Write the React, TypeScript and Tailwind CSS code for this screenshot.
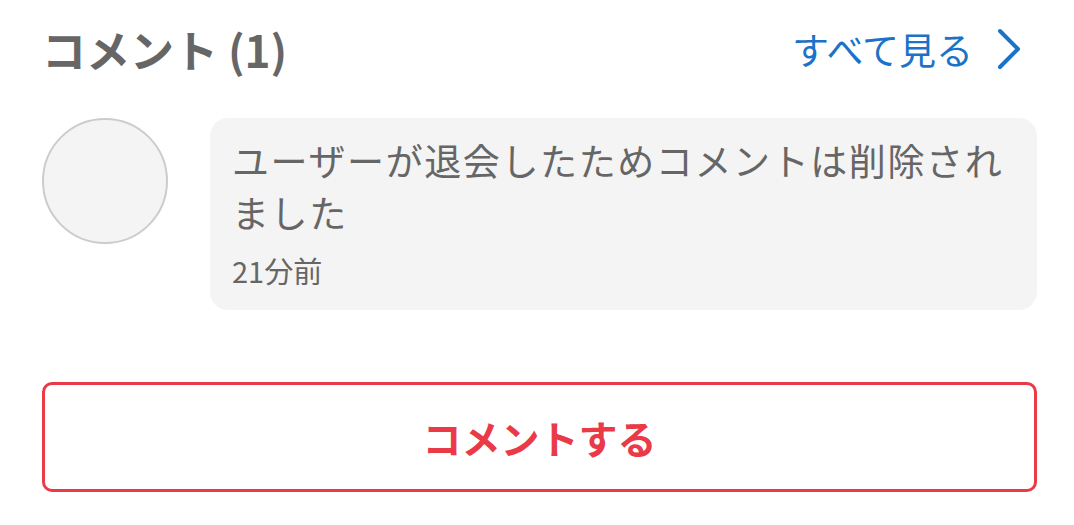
import React from 'react';

const font = { fontFamily: '"Noto Sans CJK JP", "Noto Sans", Roboto, sans-serif' };

const CommentSection: React.FC = () => {
  return (
    <div className="w-[1074px] h-[525px] bg-white pl-[42px] pr-[37px] pt-[24px]" style={font}>
      {/* Header */}
      <div className="flex items-center justify-between h-[50px]">
        <h2 className="text-[44px] font-bold text-[#666666] leading-none">コメント (1)</h2>
        <button className="flex items-center gap-[24px] text-[#1a73c8] pr-[16px]">
          <span className="text-[37px] leading-none">すべて見る</span>
          <svg width="24" height="42" viewBox="0 0 24 42" fill="none">
            <path d="M3 3 L21 21 L3 39" stroke="#1a73c8" strokeWidth="4" strokeLinecap="round" strokeLinejoin="round" />
          </svg>
        </button>
      </div>

      {/* Comment */}
      <div className="flex items-start gap-[42px] mt-[44px]">
        <div className="w-[126px] h-[126px] shrink-0 rounded-full bg-[#f4f4f4] border-2 border-[#cccccc]" />
        <div className="flex-1 rounded-[18px] bg-[#f4f4f4] pl-[22px] pr-[20px] pt-[16px] pb-[22px]">
          <p className="text-[37px] leading-[52px] tracking-[1.6px] text-[#666666]">ユーザーが退会したためコメントは削除されました</p>
          <p className="text-[29px] leading-[36px] text-[#666666] mt-[14px]">21分前</p>
        </div>
      </div>

      {/* Button */}
      <button className="mt-[72px] w-full h-[110px] rounded-[10px] border-[3px] border-[#ea3a48] text-[#ea3a48] text-[39px] font-bold">
        コメントする
      </button>
    </div>
  );
};

export default function App() {
  return <CommentSection />;
}
